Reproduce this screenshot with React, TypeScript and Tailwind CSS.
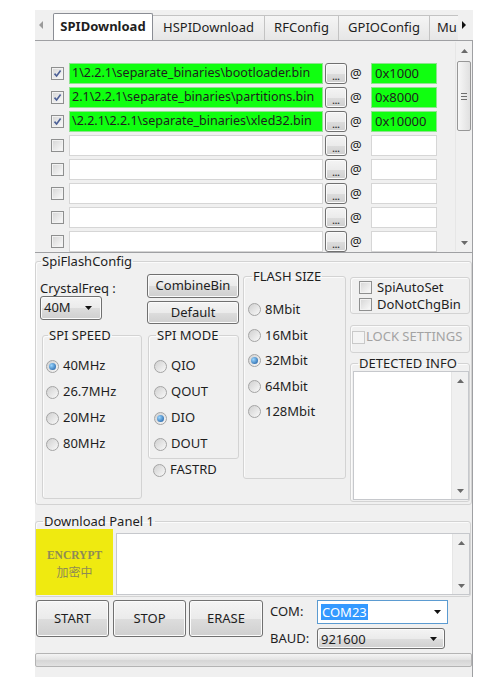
import React from "react";

type TCheckProps = { checked?: boolean; disabled?: boolean };

function Check({ checked, disabled }: TCheckProps) {
  return (
    <span
      className={`flex h-[13px] w-[13px] shrink-0 items-center justify-center border ${
        disabled
          ? "border-[#c9c9c9] bg-[#f4f4f4]"
          : "border-[#8e8f8f] bg-[linear-gradient(135deg,#d5d5d5,#fbfbfb)] shadow-[inset_0_0_0_1px_#f2f2f2]"
      }`}
    >
      {checked && (
        <svg width="9" height="9" viewBox="0 0 9 9">
          <path d="M1.5 4.6 L3.6 7 L7.6 1.6" fill="none" stroke="#4b5f96" strokeWidth="1.6" />
        </svg>
      )}
    </span>
  );
}

function Radio({ checked }: { checked?: boolean }) {
  return (
    <span className="flex h-[13px] w-[13px] shrink-0 items-center justify-center rounded-full border border-[#a4a4a4] bg-[linear-gradient(135deg,#d0d0d0,#f9f9f9)]">
      {checked && (
        <span className="h-[7px] w-[7px] rounded-full bg-[radial-gradient(circle_at_35%_35%,#9ad6ff,#14549c)]" />
      )}
    </span>
  );
}

function RadioRow({ label, checked, h = "h-[26px]" }: { label: string; checked?: boolean; h?: string }) {
  return (
    <div className={`flex items-center gap-[4px] ${h}`}>
      <Radio checked={checked} />
      <span>{label}</span>
    </div>
  );
}

function Tri({ dir, color = "#5c5c5c" }: { dir: "up" | "down" | "left" | "right"; color?: string }) {
  const pts = {
    up: "0,4 3.5,0 7,4",
    down: "0,0 7,0 3.5,4",
    left: "4,0 4,8 0,4",
    right: "0,0 0,8 4,4",
  }[dir];
  const horiz = dir === "left" || dir === "right";
  return (
    <svg width={horiz ? 4 : 7} height={horiz ? 8 : 4} viewBox={horiz ? "0 0 4 8" : "0 0 7 4"}>
      <polygon points={pts} fill={color} />
    </svg>
  );
}

function VScroll({ thumb }: { thumb?: boolean }) {
  return (
    <div className="flex w-[17px] shrink-0 flex-col bg-[#f0f0f0] border-l border-[#e6e6e6]">
      <div className="flex h-[17px] items-center justify-center">
        <Tri dir="up" color="#6a6a6a" />
      </div>
      <div className="flex-1">
        {thumb && (
          <div className="mx-[1px] mt-[2px] flex h-[70px] flex-col items-center justify-center gap-[2px] rounded-[2px] border border-[#979797] bg-[linear-gradient(90deg,#f7f7f7,#e0e0e0)]">
            <span className="h-[1px] w-[6px] bg-[#6e6e6e]" />
            <span className="h-[1px] w-[6px] bg-[#6e6e6e]" />
            <span className="h-[1px] w-[6px] bg-[#6e6e6e]" />
          </div>
        )}
      </div>
      <div className="flex h-[17px] items-center justify-center">
        <Tri dir="down" color="#6a6a6a" />
      </div>
    </div>
  );
}

const winBtn =
  "flex items-center rounded-[3px] border border-[#707070] bg-[linear-gradient(180deg,#f4f4f4_0%,#ebebeb_50%,#dddddd_51%,#cfcfcf_100%)] shadow-[inset_0_0_0_1px_#fbfbfb]";

function Tabs() {
  return (
    <div className="flex h-[30px] items-end">
      <div className="flex h-[30px] w-[18px] items-center pl-[4px]">
        <Tri dir="left" color="#9a9a9a" />
      </div>
      <div className="flex h-[27px] w-[100px] items-center justify-center rounded-t-[2px] border border-b-0 border-[#8a8d94] bg-white font-bold">
        SPIDownload
      </div>
      <div className="flex h-[25px] w-[112px] items-center justify-center border-t border-r border-[#c3c3c3] bg-[linear-gradient(180deg,#f5f5f5,#e6e6e6)]">
        HSPIDownload
      </div>
      <div className="flex h-[25px] w-[74px] items-center justify-center border-t border-r border-[#c3c3c3] bg-[linear-gradient(180deg,#f5f5f5,#e6e6e6)]">
        RFConfig
      </div>
      <div className="flex h-[25px] w-[91px] items-center justify-center border-t border-r border-[#c3c3c3] bg-[linear-gradient(180deg,#f5f5f5,#e6e6e6)]">
        GPIOConfig
      </div>
      <div className="flex h-[25px] w-[28px] items-center overflow-hidden whitespace-nowrap border-t border-[#c3c3c3] bg-[linear-gradient(180deg,#f5f5f5,#e6e6e6)] pl-[7px]">
        Mu
      </div>
      <div className="flex h-[30px] w-[15px] items-center bg-[#f0f0f0] pl-[4px]">
        <Tri dir="right" color="#111111" />
      </div>
    </div>
  );
}

type TFile = { path: string; addr: string; checked: boolean };

const files: TFile[] = [
  { path: "1\\2.2.1\\separate_binaries\\bootloader.bin", addr: "0x1000", checked: true },
  { path: "2.1\\2.2.1\\separate_binaries\\partitions.bin", addr: "0x8000", checked: true },
  { path: "\\2.2.1\\2.2.1\\separate_binaries\\xled32.bin", addr: "0x10000", checked: true },
  { path: "", addr: "", checked: false },
  { path: "", addr: "", checked: false },
  { path: "", addr: "", checked: false },
  { path: "", addr: "", checked: false },
  { path: "", addr: "", checked: false },
];

function FileRow({ file }: { file: TFile }) {
  const filled = file.path !== "";
  const box = filled
    ? "border-[#8fe38f] bg-[#10ff10]"
    : "border-[#d6d6d6] bg-white";
  return (
    <div className="flex h-[21px] items-center">
      <Check checked={file.checked} />
      <div className={`ml-[5px] flex h-[21px] w-[254px] items-center overflow-hidden whitespace-nowrap border pl-[2px] text-[12.5px] ${box}`}>
        {file.path}
      </div>
      <div className={`ml-[2px] h-[21px] w-[22px] justify-center pt-[6px] text-[9px] font-bold leading-none text-[#333] ${winBtn}`}>
        ...
      </div>
      <span className="ml-[3px] w-[12px]">@</span>
      <div className={`ml-[9px] flex h-[21px] w-[66px] items-center border pl-[3px] ${box}`}>{file.addr}</div>
    </div>
  );
}

function FileList() {
  return (
    <div className="flex h-[213px] border-t border-b border-[#9fa0a3]">
      <div className="flex flex-1 flex-col gap-[3px] pl-[16px] pt-[22px]">
        {files.map((f, i) => (
          <FileRow key={i} file={f} />
        ))}
      </div>
      <div className="flex py-[1px]">
        <VScroll thumb />
      </div>
    </div>
  );
}

const groupBorder = "rounded-[3px] border border-[#d3d3d3] shadow-[inset_1px_1px_0_#fbfbfb]";

function SpiFlashConfig() {
  return (
    <fieldset className={`h-[252px] ${groupBorder}`}>
      <legend className="ml-[5px] px-[1px] leading-[16px]">SpiFlashConfig</legend>
      <div className="flex pl-[4px]">
        {/* crystal + spi speed */}
        <div className="flex w-[102px] flex-col">
          <div className="mt-[11px] leading-[16px]">CrystalFreq :</div>
          <div className={`h-[24px] w-[62px] justify-between pl-[3px] pr-[9px] ${winBtn}`}>
            <span>40M</span>
            <Tri dir="down" color="#111" />
          </div>
          <fieldset className={`ml-[2px] mt-[8px] h-[171px] w-[100px] ${groupBorder}`}>
            <legend className="ml-[5px] px-[1px] leading-[15px]">SPI SPEED</legend>
            <div className="pl-[3px] pt-[10px]">
              <RadioRow label="40MHz" checked />
              <RadioRow label="26.7MHz" />
              <RadioRow label="20MHz" />
              <RadioRow label="80MHz" />
            </div>
          </fieldset>
        </div>

        {/* buttons + spi mode */}
        <div className="ml-[5px] flex w-[92px] flex-col">
          <div className={`mt-[5px] h-[24px] justify-center ${winBtn}`}>CombineBin</div>
          <div className={`mt-[3px] h-[23px] justify-center ${winBtn}`}>Default</div>
          <fieldset className={`ml-[1px] mt-[4px] h-[131px] w-[91px] ${groupBorder}`}>
            <legend className="ml-[7px] px-[1px] leading-[15px]">SPI MODE</legend>
            <div className="pl-[5px] pt-[10px]">
              <RadioRow label="QIO" />
              <RadioRow label="QOUT" />
              <RadioRow label="DIO" checked />
              <RadioRow label="DOUT" />
            </div>
          </fieldset>
          <div className="pl-[6px] pt-[1px]">
            <RadioRow label="FASTRD" h="h-[20px]" />
          </div>
        </div>

        {/* flash size */}
        <div className="ml-[4px] w-[103px]">
          <fieldset className={`h-[210px] ${groupBorder}`}>
            <legend className="ml-[8px] px-[1px] leading-[15px]">FLASH SIZE</legend>
            <div className="pl-[4px] pt-[13px]">
              <RadioRow label="8Mbit" h="h-[25.5px]" />
              <RadioRow label="16Mbit" h="h-[25.5px]" />
              <RadioRow label="32Mbit" checked h="h-[25.5px]" />
              <RadioRow label="64Mbit" h="h-[25.5px]" />
              <RadioRow label="128Mbit" h="h-[25.5px]" />
            </div>
          </fieldset>
        </div>

        {/* right column */}
        <div className="ml-[4px] flex w-[120px] flex-col">
          <div className={`mt-[8px] h-[37px] pl-[8px] pt-[1px] ${groupBorder}`}>
            <div className="flex h-[17px] items-center gap-[5px]">
              <Check />
              <span>SpiAutoSet</span>
            </div>
            <div className="flex h-[17px] items-center gap-[5px]">
              <Check />
              <span>DoNotChgBin</span>
            </div>
          </div>
          <div className={`mt-[11px] flex h-[28px] items-center gap-[1px] pl-[1px] pb-[4px] text-[#a3a3a3] ${groupBorder}`}>
            <Check disabled />
            <span>LOCK SETTINGS</span>
          </div>
          <fieldset className={`mt-[3px] h-[146px] pl-[2px] ${groupBorder}`}>
            <legend className="ml-[5px] px-[1px] leading-[15px]">DETECTED INFO</legend>
            <div className="flex h-[129px] w-[116px] border border-[#c6c8cc] bg-white">
              <div className="flex-1" />
              <VScroll />
            </div>
          </fieldset>
        </div>
      </div>
    </fieldset>
  );
}

function DownloadPanel() {
  return (
    <fieldset className={`mr-[2px] mt-[8px] h-[84px] ${groupBorder}`}>
      <legend className="ml-[7px] px-[1px] leading-[16px]">Download Panel 1</legend>
      <div className="flex">
        <div className="flex h-[66px] w-[77px] flex-col items-center justify-center bg-[#efea10] pt-[2px] font-['Liberation_Serif','Noto_Sans_CJK_SC',serif] text-[#8e8b55]">
          <span className="text-[11.5px] font-bold leading-[16px]">ENCRYPT</span>
          <span className="font-['Noto_Sans_CJK_SC',sans-serif] text-[12px] leading-[17px]">加密中</span>
        </div>
        <div className="ml-[3px] mt-[4px] flex h-[62px] w-[354px] border border-[#c6c8cc] bg-white">
          <div className="flex-1" />
          <VScroll />
        </div>
      </div>
    </fieldset>
  );
}

function Controls() {
  return (
    <div className="mt-[3px] flex h-[49px]">
      <div className={`ml-[1px] h-[37px] w-[73px] justify-center ${winBtn}`}>START</div>
      <div className={`ml-[4px] h-[37px] w-[73px] justify-center ${winBtn}`}>STOP</div>
      <div className={`ml-[3px] h-[37px] w-[74px] justify-center ${winBtn}`}>ERASE</div>
      <div className="ml-[7px] flex w-[47px] flex-col">
        <div className="flex h-[24px] items-center">COM:</div>
        <div className="mt-[4px] flex h-[21px] items-center">BAUD:</div>
      </div>
      <div className="flex flex-col">
        <div className="flex h-[24px] w-[131px] items-center justify-between border border-[#5b9bd1] bg-white pl-[3px] pr-[6px]">
          <span className="bg-[#3399ff] px-[1px] leading-[16px] text-white">COM23</span>
          <Tri dir="down" color="#111" />
        </div>
        <div className={`mt-[4px] h-[21px] w-[128px] justify-between pl-[3px] pr-[7px] ${winBtn}`}>
          <span className="pt-[2px]">921600</span>
          <Tri dir="down" color="#111" />
        </div>
      </div>
    </div>
  );
}

export default function App() {
  return (
    <div className="min-h-[690px] w-[488px] bg-white pl-[35px] pt-[10px] font-['Noto_Sans',sans-serif] text-[13px] text-[#1e1e1e]">
      <div className="flex h-[667px] w-[438px] flex-col bg-[#f0f0f0]">
        <Tabs />
        <div className="flex flex-1 flex-col border-r border-[#9fa0a3]">
          <FileList />
          <SpiFlashConfig />
          <DownloadPanel />
          <Controls />
          <div className="mt-[4px] h-[14px] rounded-[2px] border border-[#b4b4b4] bg-[linear-gradient(180deg,#f4f4f4_0%,#e4e4e4_45%,#d6d6d6_55%,#e2e2e2_100%)]" />
        </div>
      </div>
    </div>
  );
}
